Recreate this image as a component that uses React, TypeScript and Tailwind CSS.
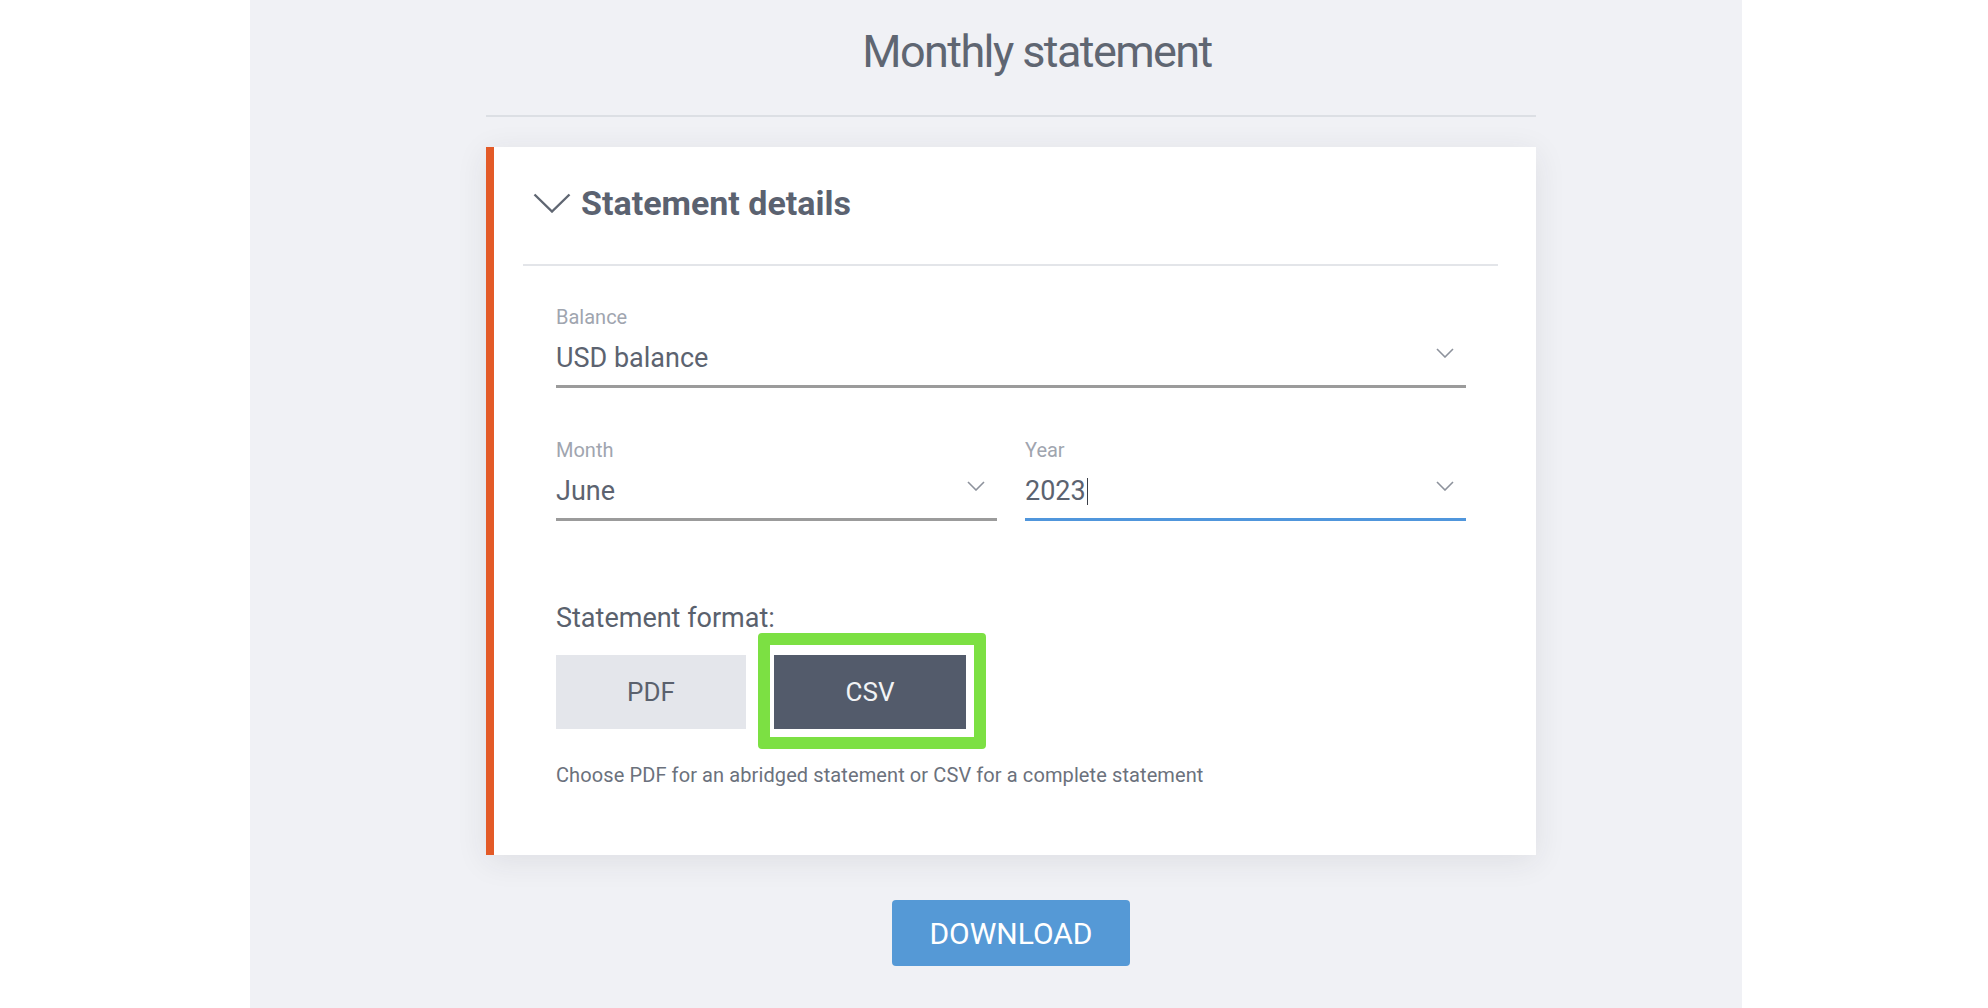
import { useState } from 'react'

function FieldChevron() {
  return (
    <svg width="18" height="10" viewBox="0 0 18 10" fill="none" className="mb-[10px] mr-[12px] shrink-0">
      <polyline points="1,1 9,9 17,1" stroke="#8d929c" strokeWidth="1.6" />
    </svg>
  )
}

function SelectField({ label, value, focused, cursor }: { label: string; value: string; focused?: boolean; cursor?: boolean }) {
  return (
    <div>
      <div className="text-[20px] leading-[24px] text-[#a0a5af]">{label}</div>
      <div
        className={`mt-[12px] flex items-center justify-between pb-[10px] border-b-[3px] ${
          focused ? 'border-[#5096dc]' : 'border-[#9b9b9b]'
        }`}
      >
        <div className="flex items-center text-[27px] leading-[34px] text-[#5c6370]">
          <span>{value}</span>
          {cursor && <span className="ml-[1px] w-px h-[27px] bg-[#3a3f48]"></span>}
        </div>
        <FieldChevron />
      </div>
    </div>
  )
}

export default function App() {
  const [format, setFormat] = useState<'pdf' | 'csv'>('csv')

  return (
    <div className="min-h-screen bg-white font-['Roboto',sans-serif]">
      <div className="ml-[250px] w-[1492px] h-[1008px] bg-[#f0f1f5] pt-[29px]">
        <div className="ml-[236px] w-[1050px]">
          {/* Page title */}
          <h1 className="pl-[52px] text-center text-[45px] leading-[46px] tracking-[-1.6px] text-[#5f6672]">
            Monthly statement
          </h1>
          <div className="mt-[40px] h-[2px] bg-[#dcdfe4]"></div>

          {/* Statement details card */}
          <div className="mt-[30px] h-[708px] bg-white border-l-8 border-[#e35a27] shadow-[0_6px_30px_rgba(40,45,60,0.09)]">
            <div className="pt-[36px] pl-[39px] flex items-center gap-[10px]">
              <svg width="38" height="20" viewBox="0 0 38 20" fill="none">
                <polyline points="1.5,1.5 19,18.5 36.5,1.5" stroke="#5f6672" strokeWidth="2.4" />
              </svg>
              <h2 className="text-[34px] leading-[40px] font-bold text-[#5b6270]">Statement details</h2>
            </div>
            <div className="mt-[41px] ml-[29px] mr-[38px] h-[2px] bg-[#e3e5e9]"></div>

            <div className="ml-[62px] w-[910px]">
              <div className="mt-[39px]">
                <SelectField label="Balance" value="USD balance" />
              </div>
              <div className="mt-[50px] grid grid-cols-2 gap-[28px]">
                <SelectField label="Month" value="June" />
                <SelectField label="Year" value="2023" focused cursor />
              </div>

              <div className="mt-[81px] text-[27px] leading-[32px] text-[#5a616d]">Statement format:</div>
              <div className="mt-[21px] flex gap-[28px]">
                <button
                  onClick={() => setFormat('pdf')}
                  className={`w-[190px] h-[74px] text-[26px] ${
                    format === 'pdf' ? 'bg-[#535b6b] text-[#f2f3f5]' : 'bg-[#e4e6eb] text-[#5a616d]'
                  }`}
                >
                  PDF
                </button>
                <div className="relative">
                  <button
                    onClick={() => setFormat('csv')}
                    className={`w-[192px] h-[74px] text-[26px] ${
                      format === 'csv' ? 'bg-[#535b6b] text-[#f2f3f5]' : 'bg-[#e4e6eb] text-[#5a616d]'
                    }`}
                  >
                    CSV
                  </button>
                  {/* highlight annotation */}
                  <div className="pointer-events-none absolute -left-[16px] -right-[20px] -top-[22px] -bottom-[20px] border-[12px] border-[#7ce043] rounded-[4px]"></div>
                </div>
              </div>
              <p className="mt-[34px] text-[20px] leading-[24px] tracking-[0.1px] text-[#6b717c]">
                Choose PDF for an abridged statement or CSV for a complete statement
              </p>
            </div>
          </div>

          <div className="mt-[45px] flex justify-center">
            <button className="w-[238px] h-[66px] rounded-[4px] bg-[#5599d6] text-white text-[30px]">
              DOWNLOAD
            </button>
          </div>
        </div>
      </div>
    </div>
  )
}
